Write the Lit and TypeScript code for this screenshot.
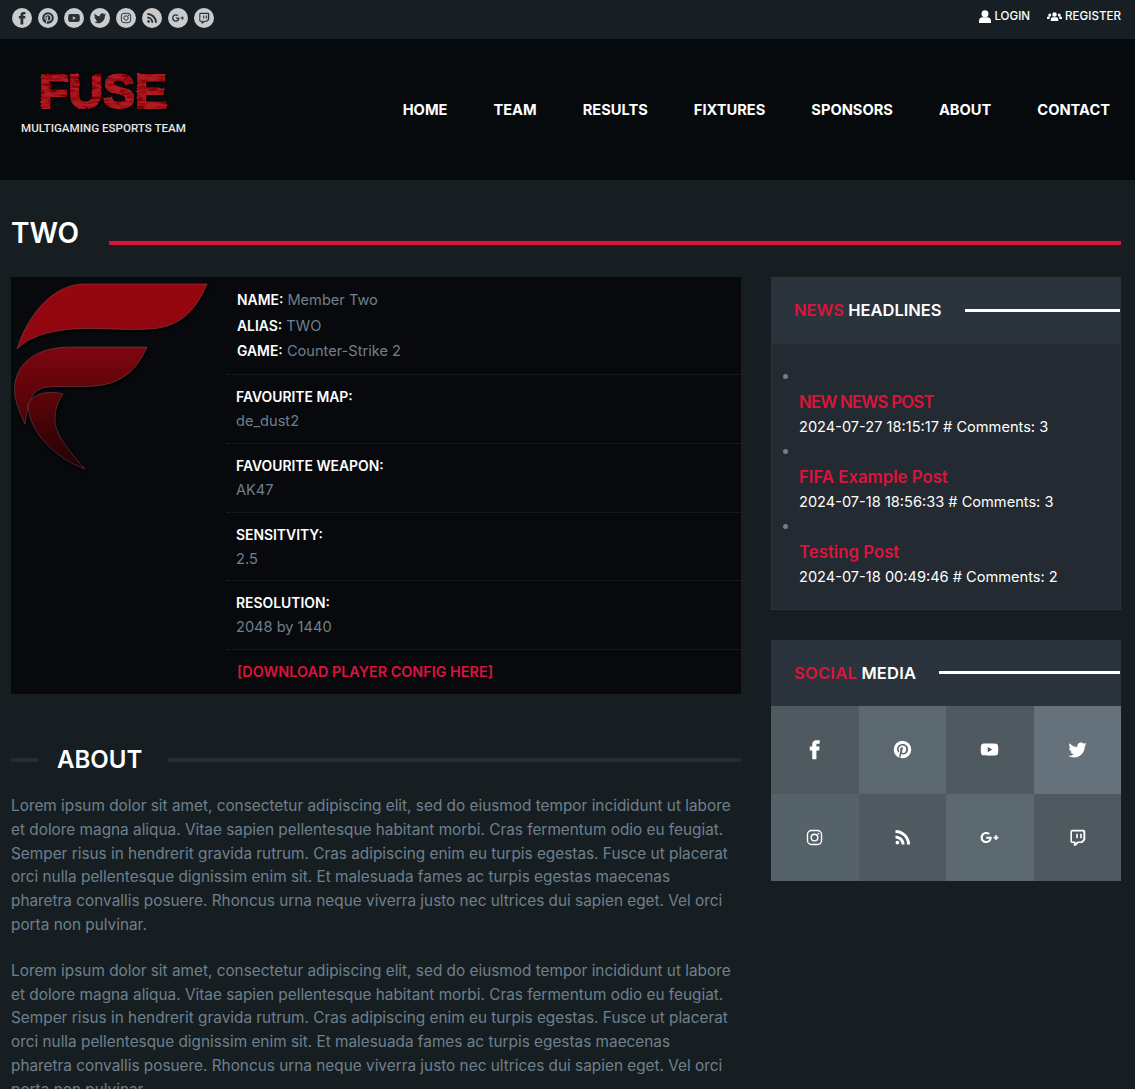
import { LitElement, css, html, svg } from 'lit';
import { customElement } from 'lit/decorators.js';

const ICONS: Record<string, unknown> = {
  facebook: svg`<path d="M14.2 8.600V6.600c0-.9.6-1.200 1.100-1.200h2.600V1.500h-3.600c-4 0-4.900 2.900-4.900 4.800v2.300H6.600V13h2.800v10h4.800V13h3.200l.4-4.400z"/>`,
  pinterest: svg`<path d="M9.04 21.54c.96.29 1.93.46 2.96.46a10 10 0 0 0 10-10A10 10 0 0 0 12 2 10 10 0 0 0 2 12c0 4.25 2.67 7.9 6.44 9.34-.09-.78-.18-2.07 0-2.96l1.15-4.94s-.29-.58-.29-1.5c0-1.38.86-2.41 1.84-2.41.86 0 1.26.63 1.26 1.44 0 .86-.57 2.09-.86 3.27-.17.98.52 1.84 1.52 1.84 1.78 0 3.16-1.9 3.16-4.58 0-2.4-1.72-4.04-4.19-4.04-2.82 0-4.48 2.1-4.48 4.31 0 .86.28 1.73.74 2.3.09.06.09.14.06.29l-.29 1.09c0 .17-.11.23-.28.11-1.28-.56-2.02-2.38-2.02-3.85 0-3.16 2.24-6.03 6.56-6.03 3.44 0 6.12 2.47 6.12 5.75 0 3.44-2.13 6.2-5.18 6.2-.97 0-1.92-.52-2.26-1.13l-.67 2.37c-.23.86-.86 2.01-1.32 2.7v-.03z"/>`,
  youtube: svg`<path d="M10 15l5.19-3L10 9v6m11.56-7.83c.13.47.22 1.1.28 1.9.07.8.1 1.49.1 2.09L22 12c0 2.19-.16 3.8-.44 4.83-.25.9-.83 1.48-1.73 1.73-.47.13-1.33.22-2.65.28-1.3.07-2.49.1-3.59.1L12 19c-4.19 0-6.8-.16-7.83-.44-.9-.25-1.48-.83-1.73-1.73-.13-.47-.22-1.1-.28-1.9-.07-.8-.1-1.49-.1-2.09L2 12c0-2.19.16-3.8.44-4.83.25-.9.83-1.48 1.73-1.73.47-.13 1.33-.22 2.65-.28 1.3-.07 2.49-.1 3.59-.1L12 5c4.19 0 6.8.16 7.83.44.9.25 1.48.83 1.73 1.73z"/>`,
  twitter: svg`<path d="M22.46 6c-.77.35-1.6.58-2.46.69.88-.53 1.56-1.37 1.88-2.38-.83.5-1.75.85-2.72 1.05C18.37 4.5 17.26 4 16 4c-2.35 0-4.27 1.92-4.27 4.29 0 .34.04.67.11.98C8.28 9.09 5.11 7.38 3 4.79c-.37.63-.58 1.37-.58 2.15 0 1.49.75 2.81 1.91 3.56-.71 0-1.37-.2-1.95-.5v.03c0 2.08 1.48 3.82 3.44 4.21a4.22 4.22 0 0 1-1.93.07 4.28 4.28 0 0 0 4 2.98 8.521 8.521 0 0 1-5.33 1.84c-.34 0-.68-.02-1.02-.06C3.44 20.29 5.7 21 8.12 21 16 21 20.33 14.46 20.33 8.79c0-.19 0-.37-.01-.56.84-.6 1.56-1.36 2.14-2.23z"/>`,
  instagram: svg`<rect x="4" y="4" width="16" height="16" rx="4.500" fill="none" stroke="currentColor" stroke-width="1.600"/><circle cx="12" cy="12" r="3.800" fill="none" stroke="currentColor" stroke-width="1.600"/><circle cx="16.500" cy="7.500" r="1"/>`,
  rss: svg`<path d="M6.18 15.64a2.18 2.18 0 0 1 2.18 2.18C8.36 19 7.38 20 6.18 20 5 20 4 19 4 17.82a2.18 2.18 0 0 1 2.18-2.18M4 3.400A16.600 16.600 0 0 1 20.600 20h-3.400A13.200 13.200 0 0 0 4 6.800V3.400m0 6.200A10.400 10.400 0 0 1 14.400 20H11a7 7 0 0 0-7-7V9.600z"/>`,
  google: svg`<g transform="translate(1.800 1.800) scale(.85)"><path d="M7.600 11v2.600h4.300c-.2 1.100-1.300 3.200-4.300 3.200-2.600 0-4.700-2.100-4.700-4.800s2.100-4.800 4.700-4.800c1.500 0 2.500.6 3 1.200l2-2C11.300 5.300 9.600 4.500 7.600 4.500 3.400 4.500 0 7.800 0 12s3.400 7.500 7.600 7.500c4.400 0 7.300-3.100 7.300-7.400 0-.5 0-.9-.1-1.100H7.600zM24 11h-2.200V8.800h-2.200V11h-2.200v2.200h2.200v2.200h2.200v-2.200H24z"/></g>`,
  twitch: svg`<g transform="translate(1.800 1.800) scale(.85)"><path fill-rule="evenodd" d="M5 1.500h15a2.500 2.500 0 0 1 2.500 2.500v10.500a2.500 2.500 0 0 1-.7 1.700l-2.600 2.600a2.500 2.500 0 0 1-1.700.7h-4l-4 3.500H7v-3.500H5A2.500 2.500 0 0 1 2.500 17V4A2.500 2.500 0 0 1 5 1.500zM5 3.900a.4.4 0 0 0-.4.4V17a.4.4 0 0 0 .4.4h4.200v2.200l2.600-2.200h5l3-3V4.300a.4.4 0 0 0-.4-.4zM10.300 7h2.200v6h-2.200zM15.500 7h2.200v6h-2.200z"/></g>`,
};

const SOCIAL = ['facebook', 'pinterest', 'youtube', 'twitter', 'instagram', 'rss', 'google', 'twitch'];
const SHADES = ['#4f5a60', '#5b6870', '#4f5a60', '#65727c', '#566269', '#4f5a60', '#5b6870', '#4f5a60'];
const NAV = ['Home', 'Team', 'Results', 'Fixtures', 'Sponsors', 'About', 'Contact'];
const STATS = [
  ['Favourite Map:', 'de_dust2'],
  ['Favourite Weapon:', 'AK47'],
  ['Sensitvity:', '2.5'],
  ['Resolution:', '2048 by 1440'],
];
const NEWS = [
  ['NEW NEWS POST', '2024-07-27 18:15:17 # Comments: 3'],
  ['FIFA Example Post', '2024-07-18 18:56:33 # Comments: 3'],
  ['Testing Post', '2024-07-18 00:49:46 # Comments: 2'],
];
const LOREM = [
  'Lorem ipsum dolor sit amet, consectetur adipiscing elit, sed do eiusmod tempor incididunt ut labore',
  'et dolore magna aliqua. Vitae sapien pellentesque habitant morbi. Cras fermentum odio eu feugiat.',
  'Semper risus in hendrerit gravida rutrum. Cras adipiscing enim eu turpis egestas. Fusce ut placerat',
  'orci nulla pellentesque dignissim enim sit. Et malesuada fames ac turpis egestas maecenas',
  'pharetra convallis posuere. Rhoncus urna neque viverra justo nec ultrices dui sapien eget. Vel orci',
  'porta non pulvinar.',
];

const icon = (name: string) =>
  html`<svg class="icon" viewBox="0 0 24 24" fill="currentColor">${ICONS[name]}</svg>`;

@customElement('app-root')
export class AppRoot extends LitElement {
  static styles = css`
    :host {
      display: block;
      background: #161e22;
      color: #6f808c;
      font-family: Inter, 'Liberation Sans', sans-serif;
      font-size: 14.6px;
      line-height: 23.8px;
      height: 1089px;
      overflow: hidden;
    }
    .topbar {
      height: 39px;
      box-sizing: border-box;
      padding: 8px 14px 0 12px;
      background: #181f24;
      display: flex;
      justify-content: space-between;
      align-items: flex-start;
    }
    .dots {
      display: flex;
      gap: 6px;
    }
    .dot {
      width: 20px;
      height: 20px;
      border-radius: 50%;
      background: #c9cbcc;
      color: #2a3034;
      display: flex;
      align-items: center;
      justify-content: center;
    }
    .dot .icon {
      width: 14px;
      height: 14px;
    }
    .account {
      display: flex;
      gap: 17px;
      color: #fff;
      font-size: 11.6px;
      font-weight: 500;
      line-height: 16px;
    }
    .account span {
      display: flex;
      align-items: center;
      gap: 3px;
    }
    .account svg {
      width: 12px;
      height: 13px;
    }
    .account svg.wide {
      width: 15px;
    }
    .masthead {
      height: 141px;
      box-sizing: border-box;
      background: #070a0d;
      padding: 0 25px 0 21px;
      display: flex;
      justify-content: space-between;
      align-items: flex-start;
    }
    .logo {
      display: flex;
      flex-direction: column;
      padding-top: 21px;
      width: 170px;
    }
    .logo svg {
      width: 170px;
      height: 61px;
      display: block;
    }
    .logo-word {
      font-family: 'Liberation Sans', sans-serif;
      font-size: 48px;
      font-weight: 700;
      fill: #ad1a24;
      stroke: #ad1a24;
      stroke-width: 2px;
    }
    .logo-sub {
      color: #e4e4e4;
      font-family: Roboto, sans-serif;
      font-size: 11.6px;
      font-weight: 500;
      line-height: 14px;
      white-space: nowrap;
    }
    nav {
      display: flex;
      gap: 46px;
      padding-top: 60px;
      color: #fff;
      font-size: 14.65px;
      font-weight: 700;
      text-transform: uppercase;
    }
    .heading {
      display: flex;
      align-items: center;
      gap: 30px;
      padding: 35px 14px 0 11px;
      height: 36px;
    }
    .heading h1 {
      margin: 0;
      color: #fff;
      font-size: 28px;
      line-height: 36px;
      font-weight: 600;
    }
    .heading i {
      flex: 1;
      height: 4px;
      margin-top: 20px;
      background: #dc143c;
    }
    .columns {
      display: grid;
      grid-template-columns: 730px 350px;
      gap: 30px;
      padding: 26px 14px 0 11px;
      align-items: start;
    }
    .profile {
      display: flex;
      background: #08090c;
    }
    .portrait {
      width: 216px;
      flex: none;
    }
    .portrait svg {
      display: block;
      width: 216px;
      height: 210px;
      filter: drop-shadow(1px 2px 1px #000);
    }
    .facts {
      flex: 1;
    }
    .row {
      padding: 10px 9px 9px;
      border-bottom: 1px dotted #22262a;
      line-height: 24px;
      height: 48.75px;
    }
    .row.info {
      height: 98px;
      box-sizing: border-box;
      padding: 11px 10px 0;
      line-height: 25.5px;
    }
    .row b {
      color: #fff;
      font-weight: 600;
      font-size: 13.9px;
      line-height: 1;
    }
    .label {
      display: block;
      text-transform: uppercase;
      line-height: 24px !important;
    }
    .download {
      display: block;
      padding: 10px;
      color: #dc143c;
      font-size: 14.4px;
      font-weight: 600;
      line-height: 24px;
    }
    .about-head {
      display: flex;
      align-items: center;
      gap: 19px;
      margin-top: 50px;
      height: 32px;
    }
    .about-head i {
      height: 4px;
      background: #252c33;
      flex: none;
      width: 27px;
    }
    .about-head i:last-child {
      flex: 1;
    }
    .about-head h2 {
      margin: 0;
      padding: 0 7px 0 0;
      color: #fff;
      font-size: 24px;
      line-height: 32px;
      font-weight: 600;
    }
    .lorem {
      margin: 18px 0 0;
      white-space: nowrap;
      font-size: 15.35px;
    }
    .lorem + .lorem {
      margin-top: 22px;
    }
    .panel {
      margin-bottom: 30px;
      background: #232a32;
      box-shadow: inset 0 0 0 1px #2b333c;
    }
    .panel-head {
      height: 66.5px;
      box-sizing: border-box;
      background: #2b333c;
      display: flex;
      align-items: center;
      gap: 23px;
      padding: 0 1px 0 23px;
      color: #fff;
      font-size: 16.5px;
      font-weight: 600;
      text-transform: uppercase;
      white-space: nowrap;
    }
    .panel-head span {
      padding-top: 2px;
    }
    .panel-head.loose span {
      letter-spacing: 0.25px;
    }
    .panel-head em {
      color: #dc143c;
      font-style: normal;
    }
    .panel-head i {
      flex: 1;
      height: 3px;
      background: #fff;
    }
    ul {
      margin: 0;
      padding: 20px 0 21px 28px;
      color: #6f808c;
    }
    li {
      line-height: 24px;
    }
    /* the marker sits on a line of its own above each post */
    li::before {
      content: '\\200b';
      display: block;
      line-height: 25px;
    }
    .post {
      display: flex;
      flex-direction: column;
      height: 50px;
    }
    .post a {
      color: #dc143c;
      font-size: 16.8px;
      font-weight: 600;
      line-height: 26px;
    }
    .post a.caps {
      letter-spacing: -0.8px;
    }
    .post span {
      color: #fff;
      font-size: 14.6px;
      line-height: 25px;
    }
    .grid {
      display: grid;
      grid-template-columns: repeat(4, 1fr);
      background: #161e22;
    }
    .cell {
      height: 87.5px;
      display: flex;
      align-items: center;
      justify-content: center;
      color: #fff;
    }
    .cell .icon {
      width: 21px;
      height: 21px;
    }
  `;

  render() {
    return html`
      <div class="topbar">
        <div class="dots">
          ${SOCIAL.map((n) => html`<span class="dot">${icon(n)}</span>`)}
        </div>
        <div class="account">
          <span>
            <svg viewBox="0 0 24 26" fill="currentColor">
              <circle cx="12" cy="7.500" r="7" />
              <path d="M0 26v-4c0-4.500 3-7.500 7-7.500h10c4 0 7 3 7 7.500v4z" />
            </svg>
            LOGIN
          </span>
          <span>
            <svg class="wide" viewBox="0 0 30 24" fill="currentColor">
              <circle cx="15" cy="8" r="4.500" />
              <circle cx="5.500" cy="9" r="3" />
              <circle cx="24.500" cy="9" r="3" />
              <path d="M7.500 21v-3c0-3 2-4.500 4-4.500h7c2 0 4 1.500 4 4.500v3zM0 17v-2c0-2 1-3 3-3h4c-1.500 1-2 2.500-2 5zM30 17v-2c0-2-1-3-3-3h-4c1.500 1 2 2.500 2 5z" />
            </svg>
            REGISTER
          </span>
        </div>
      </div>

      <header class="masthead">
        <div class="logo">
          <svg viewBox="0 0 170 61">
            <defs>
              <filter id="rough" x="-5%" y="-5%" width="110%" height="120%">
                <feTurbulence type="fractalNoise" baseFrequency="0.08 0.3" numOctaves="3" seed="4" result="n" />
                <feDisplacementMap in="SourceGraphic" in2="n" scale="2.500" result="d" />
                <feColorMatrix in="n" type="matrix" values="0 0 0 0 0.18  0 0 0 0 0  0 0 0 0 0  3 0 0 0 -1.300" result="m" />
                <feComposite in="m" in2="d" operator="in" result="t" />
                <feDropShadow in="d" dx="1.500" dy="1.500" stdDeviation="0.800" flood-color="#000" result="s" />
                <feMerge>
                  <feMergeNode in="s" />
                  <feMergeNode in="t" />
                </feMerge>
              </filter>
            </defs>
            <text class="logo-word" x="18" y="48" filter="url(#rough)">FUSE</text>
          </svg>
          <span class="logo-sub">MULTIGAMING ESPORTS TEAM</span>
        </div>
        <nav>${NAV.map((n) => html`<span>${n}</span>`)}</nav>
      </header>

      <div class="heading"><h1>TWO</h1><i></i></div>

      <div class="columns">
        <main>
          <section class="profile">
            <div class="portrait">
              <svg viewBox="0 0 216 210">
                <defs>
                  <linearGradient id="f1" x1="0" y1="0" x2="0" y2="1">
                    <stop offset="0" stop-color="#96060f" />
                    <stop offset="1" stop-color="#8f0710" />
                  </linearGradient>
                  <linearGradient id="f2" x1="0" y1="0" x2="0" y2="1">
                    <stop offset="0" stop-color="#7e0610" />
                    <stop offset="0.6" stop-color="#5f0409" />
                    <stop offset="1" stop-color="#4a0307" />
                  </linearGradient>
                  <linearGradient id="f3" x1="0" y1="0" x2="0" y2="1">
                    <stop offset="0" stop-color="#5e0409" />
                    <stop offset="1" stop-color="#220204" />
                  </linearGradient>
                </defs>
                <g stroke="#8a6a6c" stroke-width="0.4">
                  <path fill="url(#f1)" d="M6 72C16 40 40 8 72 7H196C186 32 170 50 140 52C110 54 90 50 62 52C38 54 18 60 6 72Z" />
                  <path fill="url(#f2)" d="M14 147C6 130 2 118 4 106C8 82 30 70 60 70H136C128 88 118 100 100 106C82 112 58 108 38 110C24 111 18 118 14 147Z" />
                  <path fill="url(#f3)" d="M52 117C42 114 22 114 17 128C17 148 36 178 74 192C56 172 44 156 44 143C44 132 47 125 52 117Z" />
                </g>
              </svg>
            </div>
            <div class="facts">
              <div class="row info">
                <div><b>NAME:</b> Member Two</div>
                <div><b>ALIAS:</b> TWO</div>
                <div><b>GAME:</b> Counter-Strike 2</div>
              </div>
              ${STATS.map(
                ([k, v]) => html`<div class="row"><b class="label">${k}</b>${v}</div>`,
              )}
              <a class="download">[DOWNLOAD PLAYER CONFIG HERE]</a>
            </div>
          </section>

          <div class="about-head"><i></i><h2>ABOUT</h2><i></i></div>
          ${[0, 1].map(
            () => html`<p class="lorem">${LOREM.map((l) => html`${l}<br />`)}</p>`,
          )}
        </main>

        <aside>
          <section class="panel">
            <div class="panel-head"><span><em>News</em> Headlines</span><i></i></div>
            <ul>
              ${NEWS.map(
                ([t, m], i) =>
                  html`<li><div class="post"><a class=${i === 0 ? 'caps' : ''}>${t}</a><span>${m}</span></div></li>`,
              )}
            </ul>
          </section>
          <section class="panel">
            <div class="panel-head loose"><span><em>Social</em> Media</span><i></i></div>
            <div class="grid">
              ${SOCIAL.map(
                (n, i) => html`<span class="cell" style="background:${SHADES[i]}">${icon(n)}</span>`,
              )}
            </div>
          </section>
        </aside>
      </div>
    `;
  }
}
